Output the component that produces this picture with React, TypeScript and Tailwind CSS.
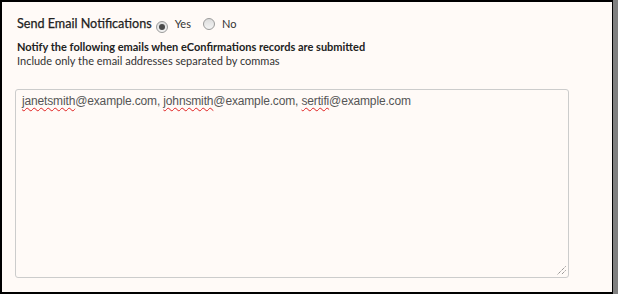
import React from "react";

function Radio({ checked }: { checked?: boolean }) {
  return (
    <span className="inline-flex items-center justify-center w-[12px] h-[12px] rounded-full border border-[#9a9a9a] bg-gradient-to-b from-[#dcdcdc] to-[#f4f4f4]">
      {checked && <span className="w-[6px] h-[6px] rounded-full bg-[#4a4a4a]" />}
    </span>
  );
}

function Misspelled({ children }: { children: React.ReactNode }) {
  return (
    <span className="underline decoration-wavy decoration-[#e02020] decoration-[1px] underline-offset-[2px]">
      {children}
    </span>
  );
}

export default function App() {
  return (
    <div className="w-[618px] h-[294px] flex bg-[#808080]">
      <div className="w-[613px] h-[294px] border-t-2 border-l-2 border-r-1 border-b-2 border-black bg-[#fffaf7] pl-[13px] pt-[13px]">
        <div className="flex items-center h-[18px] ml-[2px]" style={{ fontFamily: "Lato, sans-serif" }}>
          <span className="text-[12.6px] text-[#222] [-webkit-text-stroke:0.25px_#222]">Send Email Notifications</span>
          <span className="ml-[4px]"><Radio checked /></span>
          <span className="ml-[7px] text-[11px] text-[#333]">Yes</span>
          <span className="ml-[12px]"><Radio /></span>
          <span className="ml-[7px] text-[11px] text-[#333]">No</span>
        </div>
        <div className="ml-[2px] mt-[7px] text-[11px] leading-[14px] text-[#222]" style={{ fontFamily: "Lato, sans-serif" }}>
          <div className="font-bold">Notify the following emails when eConfirmations records are submitted</div>
          <div className="text-[#333]">Include only the email addresses separated by commas</div>
        </div>
        <div
          className="relative mt-[21px] w-[554px] h-[189px] border border-[#cccccc] rounded-[3px] bg-[#fffaf7] pl-[6px] pr-[6px] pt-[3px] text-[12px] leading-[16px] tracking-[-0.15px] text-[#555]"
          style={{ fontFamily: "'Liberation Sans', Arial, sans-serif" }}
        >
          <Misspelled>janetsmith</Misspelled>@example.com, <Misspelled>johnsmith</Misspelled>@example.com,{" "}
          <Misspelled>sertifi</Misspelled>@example.com
          <svg className="absolute right-[2px] bottom-[2px]" width="10" height="10" viewBox="0 0 10 10">
            <line x1="9.5" y1="1.5" x2="1.5" y2="9.5" stroke="#666" strokeWidth="1" strokeDasharray="1 1" />
            <line x1="9.5" y1="5.5" x2="5.5" y2="9.5" stroke="#666" strokeWidth="1" strokeDasharray="1 1" />
          </svg>
        </div>
      </div>
    </div>
  );
}
